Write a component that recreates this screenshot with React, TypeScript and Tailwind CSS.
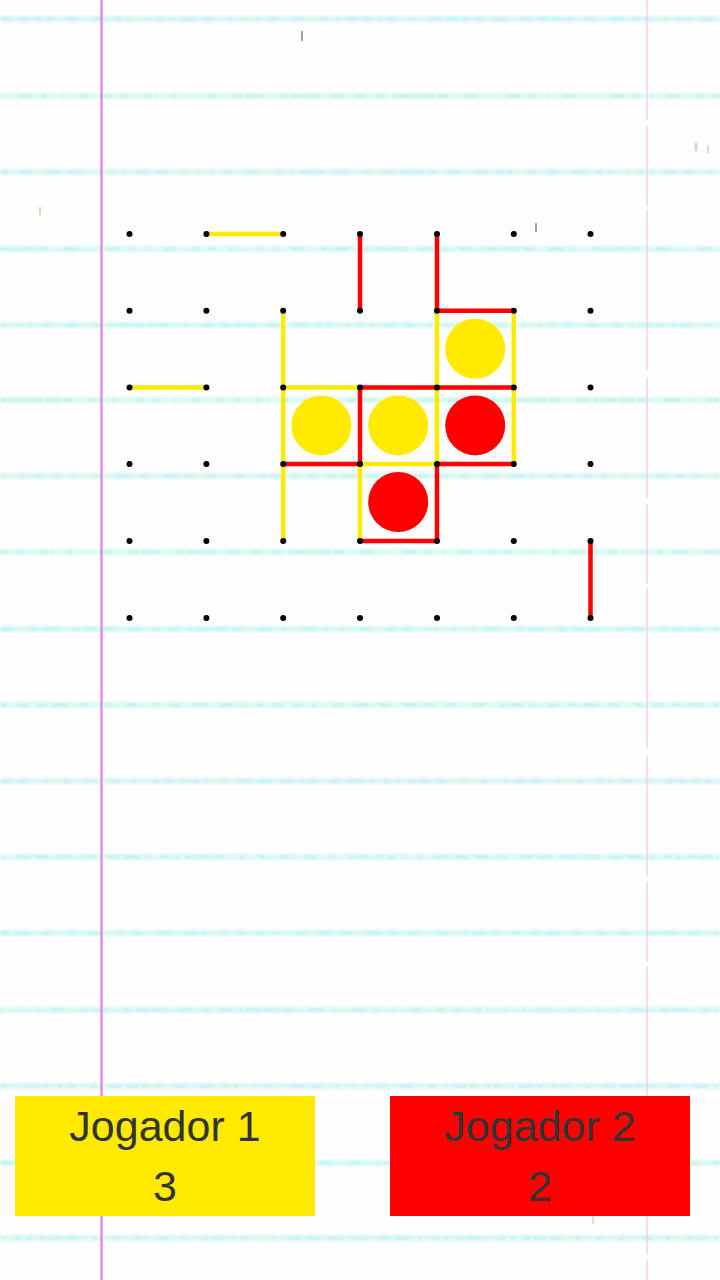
const COLS = [129.5, 206.4, 283.2, 360, 437, 513.8, 590.5];
const ROWS = [234, 310.8, 387.4, 464, 541, 618];
const YELLOW = "#ffea00";
const RED = "#ff0000";

// [col, row, col, row]
const yellowLines = [
  [1, 0, 2, 0],
  [0, 2, 1, 2],
  [2, 1, 2, 2],
  [2, 2, 2, 3],
  [2, 3, 2, 4],
  [2, 2, 3, 2],
  [4, 1, 4, 2],
  [4, 2, 4, 3],
  [5, 1, 5, 2],
  [5, 2, 5, 3],
  [3, 3, 4, 3],
  [3, 3, 3, 4],
];
const redLines = [
  [3, 0, 3, 1],
  [4, 0, 4, 1],
  [4, 1, 5, 1],
  [3, 2, 4, 2],
  [4, 2, 5, 2],
  [3, 2, 3, 3],
  [2, 3, 3, 3],
  [4, 3, 5, 3],
  [4, 3, 4, 4],
  [3, 4, 4, 4],
  [6, 4, 6, 5],
];
// [col, row, color]
const boxes: [number, number, string][] = [
  [4, 1, YELLOW],
  [2, 2, YELLOW],
  [3, 2, YELLOW],
  [4, 2, RED],
  [3, 3, RED],
];

const RULES = [19, 96, 172, 249, 325, 400, 476, 552, 629, 705, 781, 857, 933, 1010, 1086, 1163, 1238];
const SPECKS = [
  [301, 31, 2, 10, "#a0a0a0"],
  [535, 223, 2, 9, "#a0a0a0"],
  [39, 207, 2, 8, "#e4d8b8"],
  [695, 143, 2, 8, "#eec8a4"],
  [707, 145, 2, 8, "#d8d8d8"],
  [592, 1216, 2, 8, "#eedcc4"],
] as const;

// fake the uneven ink of the scanned page with a few seeded dashes
const dashFor = (seed: number) => {
  const parts: number[] = [];
  let v = seed * 97 + 13;
  for (let i = 0; i < 60; i++) {
    v = (v * 31 + 17) % 101;
    parts.push(3 + (v % 14));
  }
  return parts.join(" ");
};

function Paper() {
  return (
    <svg className="absolute inset-0" width="720" height="1280" viewBox="0 0 720 1280">
      <defs>
        <filter id="soft" x="-5%" y="-5%" width="110%" height="110%">
          <feGaussianBlur stdDeviation="1.5" />
        </filter>
        <filter id="softer" x="-5%" y="-5%" width="110%" height="110%">
          <feGaussianBlur stdDeviation="0.6" />
        </filter>
      </defs>
      <rect width="720" height="1280" fill="#fefefe" />
      <g filter="url(#soft)">
        {RULES.map((y, i) => (
          <g key={y}>
            <line x1="0" x2="720" y1={y} y2={y} stroke="#dcf9f6" strokeWidth="6" />
            <line x1="0" x2="720" y1={y} y2={y} stroke="#c0f2ee" strokeWidth="3" strokeDasharray={dashFor(i + 1)} />
          </g>
        ))}
      </g>
      <g filter="url(#softer)">
        <line x1="101.5" x2="101.5" y1="0" y2="1280" stroke="#e88ae2" strokeWidth="2.5" />
        <line x1="647" x2="647" y1="0" y2="1280" stroke="#f0cfee" strokeWidth="1.5" strokeDasharray="120 6 80 4 160 8" />
        {SPECKS.map(([x, y, w, h, c]) => (
          <rect key={x} x={x} y={y} width={w} height={h} fill={c} />
        ))}
      </g>
    </svg>
  );
}

function Board() {
  const line = (l: number[], color: string, i: number) => (
    <line
      key={color + i}
      x1={COLS[l[0]]}
      y1={ROWS[l[1]]}
      x2={COLS[l[2]]}
      y2={ROWS[l[3]]}
      stroke={color}
      strokeWidth="4.5"
    />
  );
  return (
    <svg className="absolute inset-0" width="720" height="1280" viewBox="0 0 720 1280">
      {boxes.map(([c, r, color]) => (
        <circle key={`${c}-${r}`} cx={COLS[c] + 38.2} cy={ROWS[r] + 38} r="30" fill={color} />
      ))}
      {yellowLines.map((l, i) => line(l, YELLOW, i))}
      {redLines.map((l, i) => line(l, RED, i))}
      {ROWS.map((y) => COLS.map((x) => <circle key={`${x}-${y}`} cx={x} cy={y} r="3" fill="#000" />))}
    </svg>
  );
}

function PlayerCard({ name, score, color }: { name: string; score: number; color: string }) {
  return (
    <div className={`w-[300px] h-[120px] flex flex-col items-center text-[43px] leading-[60px] text-[#333333] ${color}`}>
      <span>{name}</span>
      <span>{score}</span>
    </div>
  );
}

export default function App() {
  return (
    <div className="relative w-[720px] h-[1280px] overflow-hidden font-['Liberation_Sans',Arial,sans-serif]">
      <Paper />
      <Board />
      <div className="relative h-full flex items-end justify-between pl-[15px] pr-[30px] pb-[64px]">
        <PlayerCard name="Jogador 1" score={3} color="bg-[#ffea00]" />
        <PlayerCard name="Jogador 2" score={2} color="bg-[#ff0000]" />
      </div>
    </div>
  );
}
